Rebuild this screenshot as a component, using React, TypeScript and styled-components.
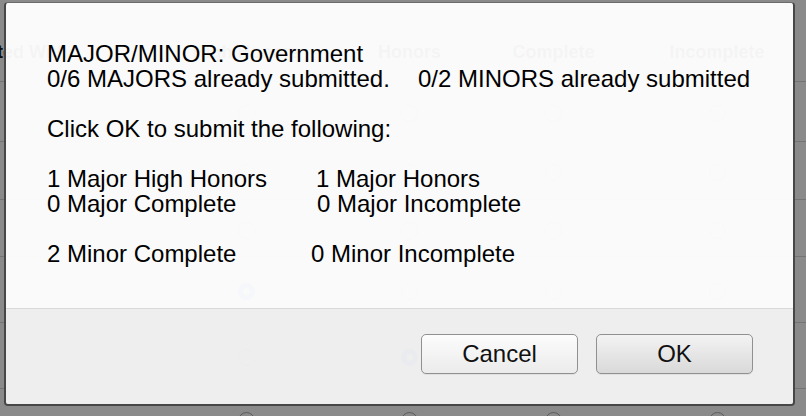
import React from "react";
import styled, { createGlobalStyle } from "styled-components";

const GlobalStyle = createGlobalStyle`
  html, body {
    margin: 0;
    padding: 0;
    width: 806px;
    height: 416px;
    overflow: hidden;
    background: #ffffff;
  }
  body {
    font-family: "Liberation Sans", Arial, Helvetica, sans-serif;
  }
  #root {
    position: relative;
    width: 806px;
    height: 416px;
    overflow: hidden;
  }
`;

const COLS = "255px 163px 163px 125px 202px";

/* ---------- page underneath (scrolled table) ---------- */
const Page = styled.div`
  margin-left: -90px;
  width: 908px;
`;

const HeadRow = styled.div`
  display: grid;
  grid-template-columns: ${COLS};
  height: 82px;
  box-sizing: border-box;
  border-bottom: 1px solid #d6d6d6;
`;

const HeadCell = styled.div<{ $start?: boolean }>`
  display: flex;
  justify-content: ${(p) => (p.$start ? "flex-start" : "center")};
  padding: 41px 0 0 ${(p) => (p.$start ? "21px" : "0")};
  font-weight: bold;
  font-size: 18px;
  line-height: 22px;
  color: #1a1a1a;
  white-space: nowrap;
`;

const Row = styled.div<{ $h: number }>`
  display: grid;
  grid-template-columns: ${COLS};
  height: ${(p) => p.$h}px;
  box-sizing: border-box;
  border-bottom: 1px solid #d6d6d6;
  align-items: center;
  justify-items: center;
`;

const Radio = styled.span<{ $on?: boolean }>`
  display: block;
  width: 17px;
  height: 17px;
  box-sizing: border-box;
  border-radius: 50%;
  background: #ffffff;
  border: ${(p) => (p.$on ? "5px solid #2f7cf6" : "1px solid #a9a9a9")};
  transform: translateY(2px);
`;

/* ---------- modal ---------- */
const Backdrop = styled.div`
  position: absolute;
  inset: 0;
  background: rgba(0, 0, 0, 0.46);
`;

const Dialog = styled.div`
  position: absolute;
  left: 4px;
  top: 2px;
  width: 791px;
  height: 404px;
  box-sizing: border-box;
  border: 2px solid #474747;
  border-top: 1px solid #6b6b6b;
  border-radius: 4px;
  display: flex;
  flex-direction: column;
  overflow: hidden;
`;

const Body = styled.div`
  height: 305px;
  flex: none;
  box-sizing: border-box;
  padding: 38px 0 0 41px;
  background: rgba(255, 255, 255, 0.955);
  display: flex;
  flex-direction: column;
  gap: 25px;
  font-size: 24px;
  line-height: 25px;
  color: #000000;
`;

const Section = styled.div`
  display: flex;
  flex-direction: column;
`;

const Line = styled.div`
  display: flex;
  white-space: pre;
`;

const Col = styled.span<{ $w: number }>`
  flex: none;
  width: ${(p) => p.$w}px;
`;

const Footer = styled.div`
  flex: 1;
  box-sizing: border-box;
  border-top: 1px solid #d9d9d9;
  background: rgba(242, 242, 242, 0.955);
  display: flex;
  justify-content: flex-end;
  align-items: flex-start;
  gap: 18px;
  padding: 25px 40px 0 0;
`;

const Button = styled.button<{ $primary?: boolean }>`
  width: 157px;
  height: 40px;
  box-sizing: border-box;
  padding: 0;
  border: 1px solid #909090;
  border-radius: 5px;
  background: ${(p) =>
    p.$primary
      ? "linear-gradient(#f3f3f3, #d9d9d9)"
      : "linear-gradient(#fcfcfc, #ebebeb)"};
  box-shadow: 0 1px 0 rgba(0, 0, 0, 0.06);
  font-family: "Liberation Sans", Arial, Helvetica, sans-serif;
  font-size: 24px;
  color: #111111;
`;

const rows: { h: number; on?: number }[] = [
  { h: 60 },
  { h: 58 },
  { h: 57 },
  { h: 66, on: 0 },
  { h: 66, on: 1 },
  { h: 60 },
];

export default function App() {
  return (
    <>
      <GlobalStyle />
      <Page>
        <HeadRow>
          <HeadCell $start>Completed With</HeadCell>
          <HeadCell>High Honors</HeadCell>
          <HeadCell>Honors</HeadCell>
          <HeadCell>Complete</HeadCell>
          <HeadCell>Incomplete</HeadCell>
        </HeadRow>
        {rows.map((r, i) => (
          <Row key={i} $h={r.h}>
            <span />
            {[0, 1, 2, 3].map((c) => (
              <Radio key={c} $on={r.on === c} />
            ))}
          </Row>
        ))}
      </Page>
      <Backdrop />
      <Dialog role="dialog">
        <Body>
          <Section>
            <Line>MAJOR/MINOR: Government</Line>
            <Line>
              <Col $w={371}>0/6 MAJORS already submitted.</Col>
              <span>0/2 MINORS already submitted</span>
            </Line>
          </Section>
          <Section>
            <Line>Click OK to submit the following:</Line>
          </Section>
          <Section>
            <Line>
              <Col $w={269}>1 Major High Honors</Col>
              <span>1 Major Honors</span>
            </Line>
            <Line>
              <Col $w={270}>0 Major Complete</Col>
              <span>0 Major Incomplete</span>
            </Line>
          </Section>
          <Section>
            <Line>
              <Col $w={264}>2 Minor Complete</Col>
              <span>0 Minor Incomplete</span>
            </Line>
          </Section>
        </Body>
        <Footer>
          <Button>Cancel</Button>
          <Button $primary>OK</Button>
        </Footer>
      </Dialog>
    </>
  );
}
